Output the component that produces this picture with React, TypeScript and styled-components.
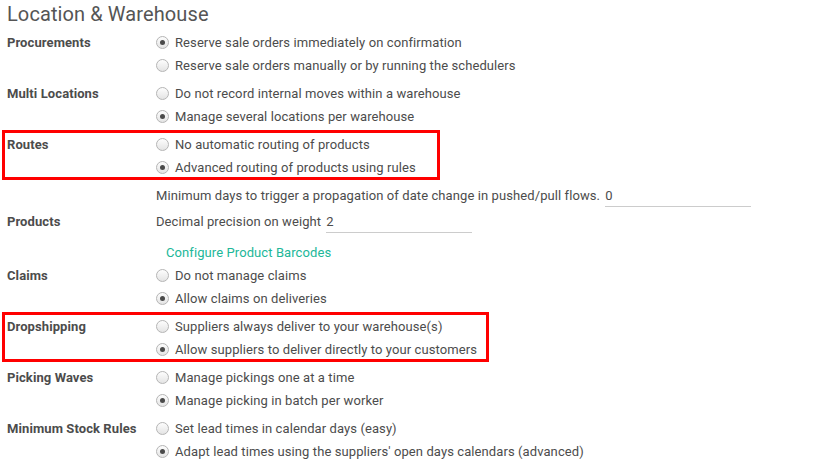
import React from "react";
import styled, { createGlobalStyle } from "styled-components";

const Global = createGlobalStyle`
  html, body { margin: 0; padding: 0; background: #fff; }
  body { font-family: Roboto, "Noto Sans", sans-serif; font-size: 13px; color: #4c4c4c; letter-spacing: 0.09px; }
`;

const Page = styled.div`
  position: relative;
  padding: 0 0 0 7px;
  width: 822px;
  height: 474px;
`;

const Title = styled.h2`
  margin: 0;
  font-size: 20px;
  font-weight: 400;
  letter-spacing: 0.1px;
  line-height: 28px;
  height: 31px;
  color: #555555;
`;

const Section = styled.div<{ $mt: number }>`
  display: grid;
  grid-template-columns: 149px 1fr;
  margin-top: ${(p) => p.$mt}px;
`;

const Label = styled.div`
  font-weight: 700;
  line-height: 23px;
  white-space: nowrap;
`;

const Options = styled.div`
  display: flex;
  flex-direction: column;
`;

const Option = styled.label`
  display: flex;
  align-items: center;
  height: 23px;
  white-space: nowrap;
`;

const Radio = styled.span<{ $checked?: boolean }>`
  box-sizing: border-box;
  width: 13px;
  height: 13px;
  border-radius: 50%;
  border: 1px solid #b5b5b5;
  background: linear-gradient(#fdfdfd, #e4e4e4);
  display: inline-flex;
  align-items: center;
  justify-content: center;
  margin-right: 6px;
  flex: none;
  &::after {
    content: "";
    display: ${(p) => (p.$checked ? "block" : "none")};
    width: 5px;
    height: 5px;
    border-radius: 50%;
    background: #4a4a4a;
  }
`;

const FieldLine = styled.div`
  display: flex;
  align-items: center;
  height: 23px;
  white-space: nowrap;
`;

const Input = styled.span`
  display: inline-block;
  box-sizing: border-box;
  margin-left: 5px;
  width: 146px;
  height: 23px;
  line-height: 23px;
  border-bottom: 1px solid #cccccc;
`;

const Link = styled.a`
  color: #21b799;
  text-decoration: none;
  line-height: 23px;
  margin-left: 10px;
  display: inline-block;
`;

const Highlight = styled.div`
  position: absolute;
  box-sizing: border-box;
  border: 3px solid #ff0000;
  pointer-events: none;
`;

type Opt = { text: string; checked?: boolean };

const Group: React.FC<{ label: string; mt: number; options: Opt[] }> = ({ label, mt, options }) => (
  <Section $mt={mt}>
    <Label>{label}</Label>
    <Options>
      {options.map((o) => (
        <Option key={o.text}>
          <Radio $checked={o.checked} />
          {o.text}
        </Option>
      ))}
    </Options>
  </Section>
);

export default function App() {
  return (
    <>
      <Global />
      <Page>
        <Title>Location &amp; Warehouse</Title>
        <Group
          label="Procurements"
          mt={0}
          options={[
            { text: "Reserve sale orders immediately on confirmation", checked: true },
            { text: "Reserve sale orders manually or by running the schedulers" },
          ]}
        />
        <Group
          label="Multi Locations"
          mt={5}
          options={[
            { text: "Do not record internal moves within a warehouse" },
            { text: "Manage several locations per warehouse", checked: true },
          ]}
        />
        <Group
          label="Routes"
          mt={5}
          options={[
            { text: "No automatic routing of products" },
            { text: "Advanced routing of products using rules", checked: true },
          ]}
        />
        <Section $mt={5}>
          <Label />
          <FieldLine>
            Minimum days to trigger a propagation of date change in pushed/pull flows.
            <Input>0</Input>
          </FieldLine>
        </Section>
        <Section $mt={3}>
          <Label>Products</Label>
          <Options>
            <FieldLine>
              Decimal precision on weight
              <Input>2</Input>
            </FieldLine>
          </Options>
        </Section>
        <Section $mt={8}>
          <Label />
          <div>
            <Link href="#">Configure Product Barcodes</Link>
          </div>
        </Section>
        <Group
          label="Claims"
          mt={0}
          options={[
            { text: "Do not manage claims" },
            { text: "Allow claims on deliveries", checked: true },
          ]}
        />
        <Group
          label="Dropshipping"
          mt={5}
          options={[
            { text: "Suppliers always deliver to your warehouse(s)" },
            { text: "Allow suppliers to deliver directly to your customers", checked: true },
          ]}
        />
        <Group
          label="Picking Waves"
          mt={5}
          options={[
            { text: "Manage pickings one at a time" },
            { text: "Manage picking in batch per worker", checked: true },
          ]}
        />
        <Group
          label="Minimum Stock Rules"
          mt={5}
          options={[
            { text: "Set lead times in calendar days (easy)" },
            { text: "Adapt lead times using the suppliers' open days calendars (advanced)", checked: true },
          ]}
        />
        <Highlight style={{ left: 2, top: 130, width: 438, height: 50 }} />
        <Highlight style={{ left: 2, top: 312, width: 487, height: 50 }} />
      </Page>
    </>
  );
}
